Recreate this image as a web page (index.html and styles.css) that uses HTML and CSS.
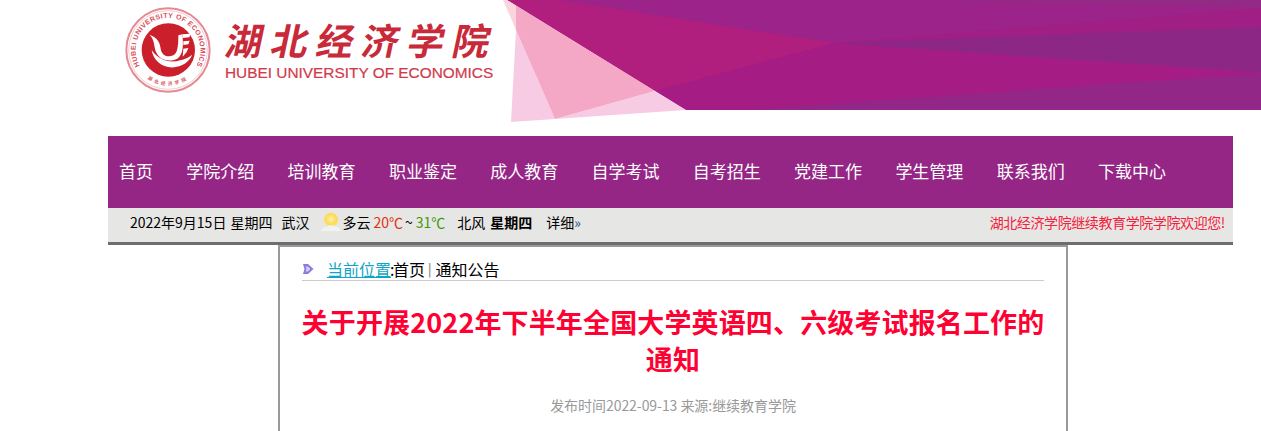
FILE: index.html
```html
<!DOCTYPE html>
<html lang="en">
<head>
  <meta charset="UTF-8">
  <meta name="viewport" content="width=device-width, initial-scale=1.0">
  <title>关于开展2022年下半年全国大学英语四、六级考试报名工作的通知</title>
  <link rel="stylesheet" href="styles.css">
</head>
<body>
  <div class="top">
    <div class="logo">
      <svg class="seal" viewBox="0 0 300 300" width="100" height="100">
        <defs>
          <path id="ringText" d="M66 208 A97 97 0 1 1 222 208"></path>
          <path id="ringCn" d="M70 226 A106 106 0 0 0 218 226"></path>
        </defs>
        <circle cx="144" cy="150" r="125" fill="#fff" stroke="#e58a94" stroke-width="6"></circle>
        <circle cx="144" cy="150" r="118" fill="none" stroke="#eeb0b6" stroke-width="2"></circle>
        <circle cx="145" cy="150" r="80" fill="#cb1f2c"></circle>
        <text class="seal-en"><textPath href="#ringText" startOffset="50%" text-anchor="middle">HUBEI UNIVERSITY OF ECONOMICS</textPath></text>
        <text class="seal-cn"><textPath href="#ringCn" startOffset="50%" text-anchor="middle">湖北经济学院</textPath></text>
        <path fill="#fff" d="M88 104C108 110 120 124 122 146C125 166 142 174 160 166C172 160 175 142 175 106L187 103C191 140 189 164 172 176C150 187 122 182 110 160C100 140 106 120 88 104Z"></path>
        <path fill="#fff" d="M95 150C100 186 140 216 185 196C200 189 210 179 217 164C205 173 195 178 180 181C150 191 115 180 95 150Z"></path>
        <path fill="#fff" d="M187 103L212 101L208 112L188 114ZM190 124L209 122L205 133L190 135ZM190 146L205 144L200 156L188 170Z"></path>
      </svg>
      <div class="logo-text">
        <div class="logo-cn">湖北经济学院</div>
        <div class="logo-en">HUBEI UNIVERSITY OF ECONOMICS</div>
      </div>
    </div>
    <svg class="banner" viewBox="500 0 761 124" width="761" height="124">
      <polygon fill="#9c2389" points="507,0 1261,0 1261,110 686,110"></polygon>
      <polygon fill="#932a85" points="930,0 1261,0 1261,8"></polygon>
      <polygon fill="#a01f85" points="834,43 1261,8 1261,27"></polygon>
      <polygon fill="#8c2786" points="834,43 1261,27 1261,72"></polygon>
      <polygon fill="#922787" points="746,110 1261,74 1261,110"></polygon>
      <polygon fill="#a41c84" points="655,91 834,43 1261,73 746,110 686,110"></polygon>
      <polygon fill="#b01e7e" points="507,0 559,0 834,43 655,91"></polygon>
      <polygon fill="#f8cbe4" points="516,30 555,119 511,122"></polygon>
      <polygon fill="#f8cbe4" points="555,119 655,91 686,110 511,122"></polygon>
      <polygon fill="#f5a8c6" points="516,5.5 655,91 555,119 516,30"></polygon>
      <polygon fill="#fad5dc" points="503,0 507,0 516,5.5 516,30"></polygon>
    </svg>
  </div>

  <div class="wrap">
    <ul class="nav">
      <li>首页</li>
      <li>学院介绍</li>
      <li>培训教育</li>
      <li>职业鉴定</li>
      <li>成人教育</li>
      <li>自学考试</li>
      <li>自考招生</li>
      <li>党建工作</li>
      <li>学生管理</li>
      <li>联系我们</li>
      <li>下载中心</li>
    </ul>

    <div class="info">
      <div class="weather">
        <span>2022年9月15日</span>
        <span class="w-week">星期四</span>
        <span class="w-city">武汉</span>
        <svg class="sun" viewBox="0 0 20 20" width="20" height="20">
          <defs>
            <radialGradient id="sunFill" cx="50%" cy="45%" r="55%">
              <stop offset="0" stop-color="#fff3a0"></stop>
              <stop offset="0.65" stop-color="#fbd95c"></stop>
              <stop offset="1" stop-color="#f6e6b0"></stop>
            </radialGradient>
          </defs>
          <circle cx="10" cy="8" r="7.5" fill="url(#sunFill)"></circle>
          <path fill="#f1f2f2" d="M0 19C1 16 4 15 6 15C7 13 11 12 13 14C15 14 19 16 20 19Z"></path>
        </svg>
        <span class="w-sky">多云</span>
        <span class="w-low">20℃</span>
        <span class="w-sep">~</span>
        <span class="w-high">31℃</span>
        <span class="w-wind">北风</span>
        <b class="w-day">星期四</b>
        <span class="w-more">详细<i>»</i></span>
      </div>
      <div class="welcome">湖北经济学院继续教育学院学院欢迎您!</div>
    </div>

    <div class="article">
      <div class="crumb">
        <svg class="crumb-icon" viewBox="0 0 12 12" width="12" height="12">
          <path fill="#8d7bdc" d="M1 1L6 1L11.5 6L6 11L1 11L2.5 6Z"></path>
          <path fill="#d6ccf6" d="M3.5 3.5L6 3.5L8.5 6L6 8.5L3.5 8.5L4.5 6Z"></path>
        </svg>
        <span class="crumb-label">当前位置</span><span class="crumb-colon">:</span><span>首页</span><span class="crumb-sep">|</span><span>通知公告</span>
      </div>
      <h1 class="title">关于开展2022年下半年全国大学英语四、六级考试报名工作的通知</h1>
      <p class="meta">发布时间2022-09-13 来源:继续教育学院</p>
    </div>
  </div>
</body>
</html>
```

FILE: styles.css
```css
*{margin:0;padding:0;}
html,body{height:431px;overflow:hidden;}
body{background:#fff;font-family:"Noto Sans CJK SC","Liberation Sans",sans-serif;color:#000;}

.top{display:flex;justify-content:space-between;height:136px;padding-left:120px;}
.logo{display:flex;flex:none;width:380px;}
.seal{display:block;flex:none;}
.seal-en{font:bold 21px "Liberation Sans",sans-serif;fill:#d9505c;letter-spacing:1.2px;}
.seal-cn{font:bold 14px "Noto Sans CJK SC",sans-serif;fill:#d9505c;letter-spacing:8px;}
.logo-text{margin-left:5px;padding-top:15px;}
.logo-cn{
  margin-left:2px;
  font-size:37px;
  font-weight:bold;
  line-height:48px;
  letter-spacing:8.4px;
  color:#c92a3a;
  white-space:nowrap;
  transform:skewX(-12deg);
}
.logo-en{
  font-family:"Liberation Sans",sans-serif;
  font-size:15.4px;
  line-height:17px;
  margin-top:1px;
  color:#d13a4a;
  white-space:nowrap;
  -webkit-text-stroke:0.2px #d13a4a;
}
.banner{display:block;flex:none;}

.wrap{margin:0 28px 0 108px;}
.nav{
  display:flex;
  align-items:center;
  gap:33.3px;
  height:72px;
  box-sizing:border-box;
  padding:0 0 4px 11px;
  background:#952686;
  list-style:none;
}
.nav li{color:#fff;font-size:17px;white-space:nowrap;}

.info{
  display:flex;
  justify-content:space-between;
  align-items:center;
  height:34px;
  background:#e6e6e4;
  border-bottom:3px solid #6e6e6e;
  font-size:14px;
}
.weather{display:flex;align-items:center;white-space:nowrap;margin:0 0 7px 22px;}
.w-week{margin-left:4px;}
.w-city{margin-left:9px;}
.sun{margin-left:12px;}
.w-sky{margin-left:1px;}
.w-low{margin-left:3px;color:#e03010;}
.w-sep{margin:0 3px 0 2px;}
.w-high{color:#3a9a10;}
.w-wind{margin-left:12px;}
.w-day{margin-left:5px;}
.w-more{margin-left:14px;}
.w-more i{font-style:normal;color:#224a80;}
.welcome{color:#f5203c;white-space:nowrap;letter-spacing:-0.4px;margin:0 8px 7px 0;}

.article{
  width:742px;
  height:184px;
  margin-left:170px;
  padding:0 22px;
  border:2px solid #999;
  border-bottom:0;
}
.crumb{
  display:flex;
  align-items:center;
  height:22px;
  padding-top:11px;
  border-bottom:1px solid #ccc;
  font-size:16px;
  line-height:20px;
}
.crumb-icon{margin-right:13px;}
.crumb-label{color:#0fa5c5;text-decoration:underline;}
.crumb-colon{margin:0 -1.5px 0 -1px;}
.crumb-sep{margin:0 4px 0 3px;font-size:13px;color:#666;}
.title{
  margin:22px -6px 0;
  font-size:27px;
  line-height:37px;
  font-weight:bold;
  letter-spacing:0.14px;
  text-align:center;
  color:#ff0033;
}
.meta{
  margin-top:18px;
  font-size:14px;
  line-height:20px;
  letter-spacing:-0.05px;
  text-align:center;
  color:#999;
}
```
